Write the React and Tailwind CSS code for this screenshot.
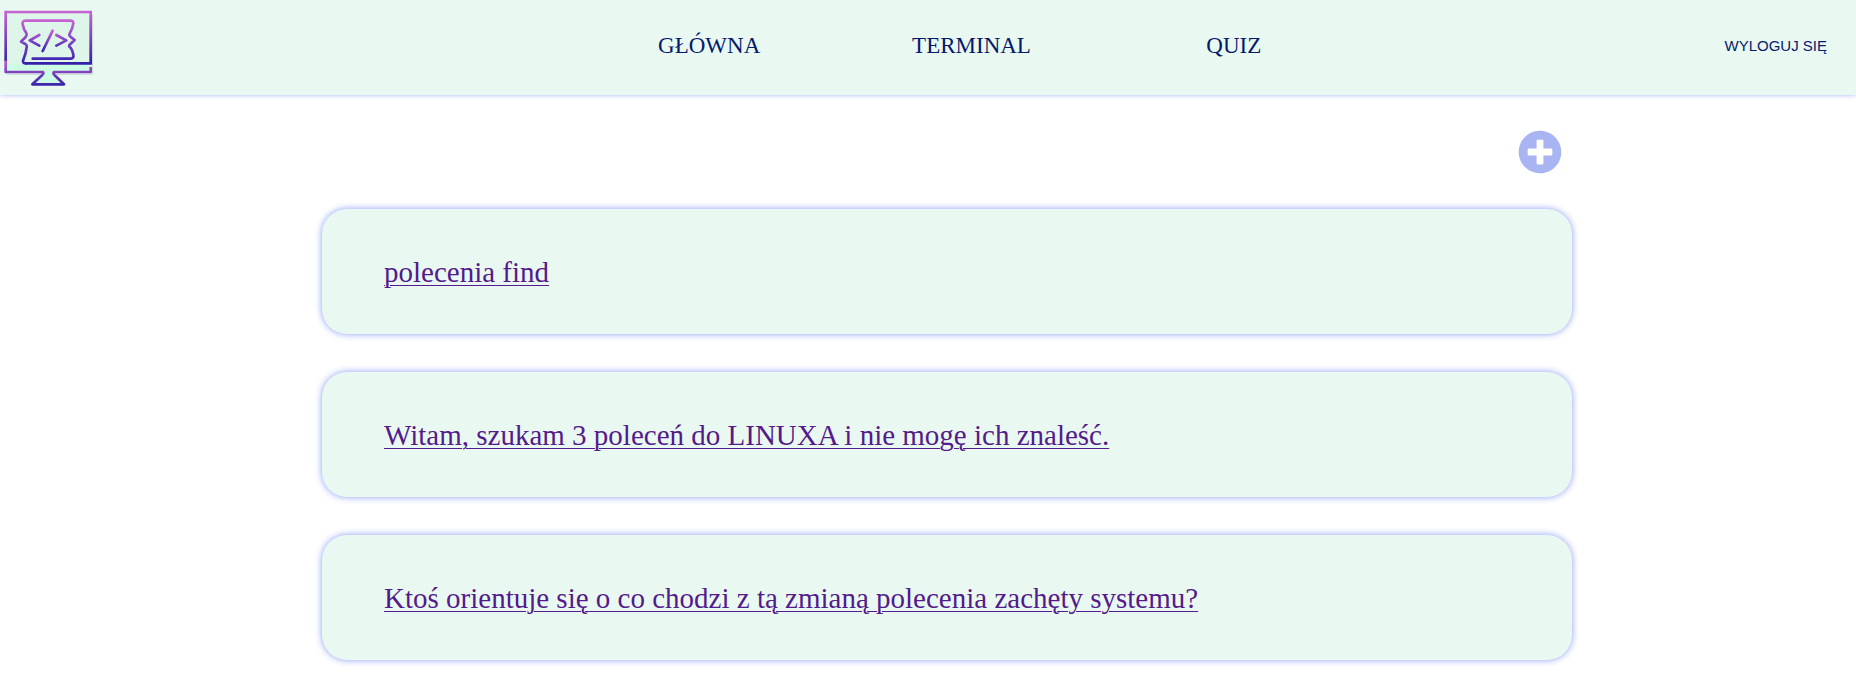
import { FaPlusCircle } from 'react-icons/fa';

const links = ['GŁÓWNA', 'TERMINAL', 'QUIZ'];

const posts = [
  'polecenia find',
  'Witam, szukam 3 poleceń do LINUXA i nie mogę ich znaleść.',
  'Ktoś orientuje się o co chodzi z tą zmianą polecenia zachęty systemu?',
];

function Logo() {
  return (
    <svg viewBox="0 0 288 270" className="h-[90px] w-24" fill="none" aria-hidden="true">
      <defs>
        <linearGradient id="frame" gradientUnits="userSpaceOnUse" x1="0" y1="34" x2="0" y2="190">
          <stop offset="0" stopColor="#c763d4" />
          <stop offset="1" stopColor="#3420a8" />
        </linearGradient>
        <linearGradient id="base" gradientUnits="userSpaceOnUse" x1="0" y1="184" x2="0" y2="256">
          <stop offset="0" stopColor="#b85bd0" />
          <stop offset="1" stopColor="#3a22aa" />
        </linearGradient>
        <linearGradient id="scroll" gradientUnits="userSpaceOnUse" x1="0" y1="60" x2="0" y2="192">
          <stop offset="0" stopColor="#c763d4" />
          <stop offset="1" stopColor="#3420b4" />
        </linearGradient>
        <linearGradient id="code" gradientUnits="userSpaceOnUse" x1="0" y1="90" x2="0" y2="156">
          <stop offset="0" stopColor="#c763d4" />
          <stop offset="1" stopColor="#3420b4" />
        </linearGradient>
      </defs>
      <path d="M20 223 H278 V44" stroke="#c9d6d0" strokeWidth="3" />
      <path d="M17 36 H272 V216 H17 Z" fill="#def5ea" />
      <path d="M20 192 H270 V214 H20 Z M130 214 H160 L190 250 H98 Z" fill="#ccfde4" />
      <path d="M17 184 V36 H272 V190 H76" stroke="url(#frame)" strokeWidth="8" />
      <path d="M17 182 V216 H129 Q132 221 126 226 L97 253 H192 L164 226 Q158 220 162 216 H272 V201" stroke="url(#base)" strokeWidth="8" strokeLinejoin="round" />
      <path d="M98 176 H212 Q222 175 220 164 Q216 145 208 140 Q206 136 211 132 L224 120 L211 110 Q206 105 209 101 Q217 88 220 70 Q220 62 211 62 H76 Q66 63 68 73 Q71 90 79 99 Q82 105 77 111 L63 125 L76 132 Q82 136 80 142 Q78 160 69 182 Q68 190 78 190" stroke="url(#scroll)" strokeWidth="8" strokeLinecap="round" strokeLinejoin="round" />
      <path d="M118 105 L89 121 L118 137 M158 92 L128 153 M169 105 L199 121 L169 137" stroke="url(#code)" strokeWidth="8" strokeLinecap="round" strokeLinejoin="round" />
    </svg>
  );
}

export default function App() {
  return (
    <div className="min-h-screen bg-white font-['Liberation_Serif',serif]">
      <header className="grid grid-cols-[578fr_787fr_491fr] items-center bg-[#e9f9f2] pb-[5px] shadow-[0_0_5px_#a9b5f5]">
        <a href="#start" aria-label="Start" className="justify-self-start">
          <Logo />
        </a>
        <nav className="grid grid-cols-3 pt-0.5 text-center text-[23px] text-[#061a6b]">
          {links.map((label) => (
            <a key={label} href={`#${label.toLowerCase()}`}>
              {label}
            </a>
          ))}
        </nav>
        <button
          type="button"
          className="mr-[29px] justify-self-end pt-0.5 font-['Liberation_Sans',sans-serif] text-[15px] text-[#061a6b]"
        >
          WYLOGUJ SIĘ
        </button>
      </header>

      <main className="ml-[17.35%] w-[67.35%] pt-[35px] pb-5">
        <div className="mb-[35px] flex justify-end pr-2.5">
          <button type="button" aria-label="Dodaj" className="text-[#a9b5f3]">
            <FaPlusCircle className="size-11" />
          </button>
        </div>
        <ul className="flex flex-col gap-[38px]">
          {posts.map((title, i) => (
            <li
              key={title}
              className="flex h-[125px] items-center rounded-[25px] bg-[#e9f9f2] px-[62px] pt-0.5 text-[29px] shadow-[0_0_7px_#8c9cf5]"
            >
              <a
                href={`#post-${i + 1}`}
                className="text-[#551a8b] underline decoration-1 underline-offset-3"
              >
                {title}
              </a>
            </li>
          ))}
        </ul>
      </main>
    </div>
  );
}
